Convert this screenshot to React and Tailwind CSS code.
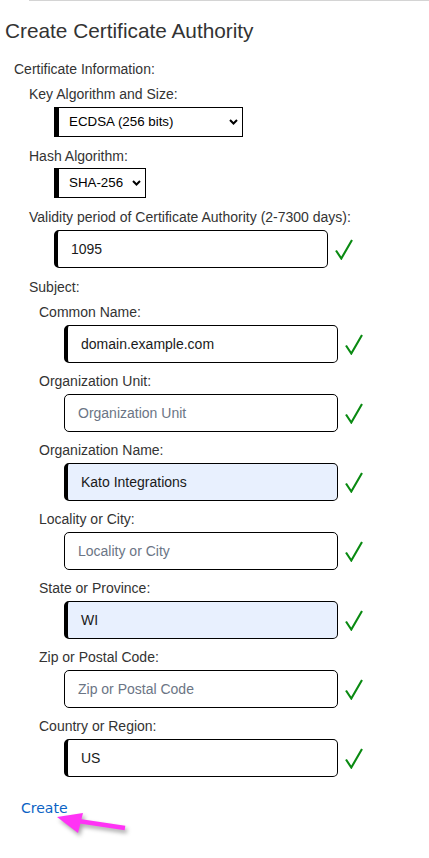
import React from "react";

const font = { fontFamily: '"Liberation Sans", Arial, sans-serif' };

function Check() {
  return (
    <svg width="18" height="21" viewBox="0 0 18 21" className="shrink-0">
      <path d="M1 11.5 L6.3 19.5 L17 1" fill="none" stroke="#0a8a12" strokeWidth="2.1" strokeLinejoin="miter" />
    </svg>
  );
}

function Chevron() {
  return (
    <svg width="9" height="6" viewBox="0 0 9 6" className="shrink-0">
      <path d="M1 1 L4.5 4.5 L8 1" fill="none" stroke="#000" strokeWidth="2" />
    </svg>
  );
}

function Select({ value, w }) {
  return (
    <div className={`ml-[54px] mt-[5px] h-[30px] ${w} flex items-center justify-between border border-black border-l-[5px] bg-white pl-[10px] pr-[4px] text-[13.33px] text-black`}>
      <span>{value}</span>
      <Chevron />
    </div>
  );
}

function Field({ value, placeholder, filled, autofill }) {
  return (
    <div className="flex items-center gap-[7px] mt-[5px]">
      <div
        className={`w-[274px] h-[38px] rounded-[5px] border border-black flex items-center text-[14px] ${filled ? "border-l-[4px] pl-[13px]" : "pl-[13px]"} ${autofill ? "bg-[#e8f0fe]" : "bg-white"}`}
      >
        {value ? <span className="text-[#1a1a1a]">{value}</span> : <span className="text-[#6b7585]">{placeholder}</span>}
      </div>
      <Check />
    </div>
  );
}

const subject = [
  { label: "Common Name:", value: "domain.example.com", filled: true },
  { label: "Organization Unit:", placeholder: "Organization Unit" },
  { label: "Organization Name:", value: "Kato Integrations", filled: true, autofill: true },
  { label: "Locality or City:", placeholder: "Locality or City" },
  { label: "State or Province:", value: "WI", filled: true, autofill: true },
  { label: "Zip or Postal Code:", placeholder: "Zip or Postal Code" },
  { label: "Country or Region:", value: "US", filled: true },
];

export default function App() {
  return (
    <div className="relative w-[429px] h-[858px] bg-white text-[#333] overflow-hidden" style={font}>
      <div className="ml-[29px] h-px bg-[#d4d4d4]" />
      <h1 className="ml-[5px] mt-[18px] text-[20.8px] leading-[23px] text-[#333] font-normal">Create Certificate Authority</h1>
      <div className="ml-[14px] mt-[19px] text-[14px] leading-4">Certificate Information:</div>
      <div className="ml-[29px] mt-[9px] text-[14px] leading-4">Key Algorithm and Size:</div>
      <Select value="ECDSA (256 bits)" w="w-[189px]" />
      <div className="ml-[29px] mt-[11px] text-[14px] leading-4">Hash Algorithm:</div>
      <div className="mt-[-1px]">
        <Select value="SHA-256" w="w-[92px]" />
      </div>
      <div className="ml-[29px] mt-[11px] text-[14px] leading-4">Validity period of Certificate Authority (2-7300 days):</div>
      <div className="ml-[54px]">
        <Field value="1095" filled />
      </div>
      <div className="ml-[29px] mt-[11px] text-[14px] leading-4">Subject:</div>
      <div className="ml-[39px] mt-[9px] flex flex-col">
        {subject.map((f, i) => (
          <div key={f.label} className={i === 0 ? "" : "mt-[10px]"}>
            <div className="text-[14px] leading-4">{f.label}</div>
            <div className="ml-[25px]">
              <Field {...f} />
            </div>
          </div>
        ))}
      </div>
      <div className="ml-[21px] mt-[23px] text-[14px] leading-4 text-[#0b63c5]" style={{ fontFamily: '"DejaVu Sans", Verdana, sans-serif' }}>
        Create
      </div>
      <svg className="absolute left-[50px] top-[806px]" width="90" height="36" viewBox="0 0 90 36" style={{ filter: "drop-shadow(2px 3px 2px rgba(0,0,0,0.35))" }}>
        <path d="M28 15 L75 22" stroke="#ff33f5" strokeWidth="4.5" strokeLinecap="butt" />
        <polygon points="7,11 33,7 28,27" fill="#ff33f5" />
      </svg>
    </div>
  );
}
